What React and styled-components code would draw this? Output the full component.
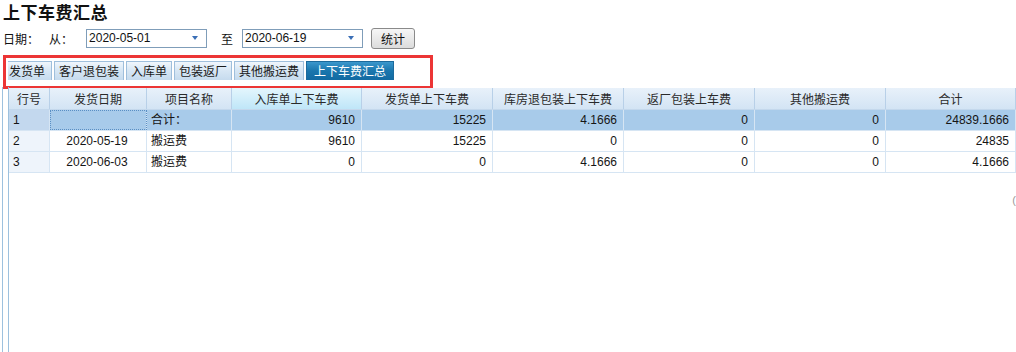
import React from "react";
import styled, { createGlobalStyle } from "styled-components";

const GlobalStyle = createGlobalStyle`
  html, body {
    margin: 0;
    padding: 0;
    background: #fff;
    font-family: "Liberation Sans", "Noto Sans CJK SC", sans-serif;
    font-size: 12px;
    color: #1e1e1e;
  }
`;

const columns = [
  { title: "行号", width: "41px", align: "left" },
  { title: "发货日期", width: "97px", align: "center" },
  { title: "项目名称", width: "85px", align: "left" },
  { title: "入库单上下车费", width: "130px", align: "right", sorted: true },
  { title: "发货单上下车费", width: "131px", align: "right" },
  { title: "库房退包装上下车费", width: "131px", align: "right" },
  { title: "返厂包装上车费", width: "131px", align: "right" },
  { title: "其他搬运费", width: "131px", align: "right" },
  { title: "合计", width: "1fr", align: "right" },
];

const rows = [
  ["1", "", "合计：", "9610", "15225", "4.1666", "0", "0", "24839.1666"],
  ["2", "2020-05-19", "搬运费", "9610", "15225", "0", "0", "0", "24835"],
  ["3", "2020-06-03", "搬运费", "0", "0", "4.1666", "0", "0", "4.1666"],
];

const tabs = ["发货单", "客户退包装", "入库单", "包装返厂", "其他搬运费", "上下车费汇总"];

const template = columns.map((c) => c.width).join(" ");

export default function App() {
  return (
    <Page>
      <GlobalStyle />
      <Title>上下车费汇总</Title>
      <FilterBar>
        <Label>日期：</Label>
        <Label $gap="13px">从：</Label>
        <DateBox>
          <span>2020-05-01</span>
          <Arrow />
        </DateBox>
        <Label $gap="9px" $left="14px">至</Label>
        <DateBox>
          <span>2020-06-19</span>
          <Arrow />
        </DateBox>
        <Button>统计</Button>
      </FilterBar>
      <TabFrame>
        <Tabs>
          {tabs.map((t, i) => (
            <Tab key={t} $active={i === tabs.length - 1}>
              {t}
            </Tab>
          ))}
        </Tabs>
      </TabFrame>
      <Panel>
        <Grid>
          <HeaderRow>
            {columns.map((c) => (
              <HeaderCell key={c.title} $sorted={c.sorted}>
                {c.title}
              </HeaderCell>
            ))}
          </HeaderRow>
          {rows.map((r, ri) => (
            <Row key={ri} $selected={ri === 0}>
              {r.map((v, ci) => (
                <Cell
                  key={ci}
                  $align={columns[ci].align}
                  $rowNo={ci === 0}
                  $selected={ri === 0}
                  $focus={ri === 0 && ci === 1}
                >
                  {v}
                </Cell>
              ))}
            </Row>
          ))}
        </Grid>
        <EdgeMark>(</EdgeMark>
      </Panel>
    </Page>
  );
}

const Page = styled.div`
  width: 1016px;
  height: 352px;
  overflow: hidden;
  display: flex;
  flex-direction: column;
`;

const Title = styled.div`
  font-family: "Noto Sans CJK SC", sans-serif;
  font-weight: 700;
  font-size: 17px;
  line-height: 20px;
  padding: 2px 0 0 3px;
  letter-spacing: 0.5px;
  color: #111;
`;

const FilterBar = styled.div`
  display: flex;
  align-items: center;
  height: 20px;
  margin-top: 6px;
  padding-left: 3px;
`;

const Label = styled.span`
  font-family: "Noto Sans CJK SC", sans-serif;
  font-size: 12px;
  margin-left: ${(p) => p.$left || "0"};
  margin-right: ${(p) => p.$gap || "10px"};
  color: #111;
`;

const DateBox = styled.div`
  width: 109px;
  height: 17px;
  border: 1px solid #7f9db9;
  display: flex;
  align-items: center;
  justify-content: space-between;
  padding: 0 8px 0 2px;
  box-sizing: content-box;
  font-size: 12px;
  color: #111;
`;

const Arrow = styled.i`
  width: 0;
  height: 0;
  border-left: 3px solid transparent;
  border-right: 3px solid transparent;
  border-top: 4px solid #3b6fb6;
`;

const Button = styled.button`
  margin-left: 8px;
  width: 44px;
  height: 21px;
  border: 1px solid #8a8a8a;
  border-radius: 3px;
  background: linear-gradient(#f6f6f6, #dcdcdc);
  font-family: "Noto Sans CJK SC", sans-serif;
  font-size: 12px;
  color: #111;
  padding: 0;
`;

const TabFrame = styled.div`
  margin: 7px 0 0 3px;
  width: 422px;
  height: 25px;
  border: 3px solid #ec3535;
  padding: 3px 0 0 2px;
  box-sizing: content-box;
`;

const Tabs = styled.div`
  display: flex;
  gap: 2px;
  height: 19px;
`;

const Tab = styled.div`
  font-family: "Noto Sans CJK SC", sans-serif;
  font-size: 12px;
  line-height: 18px;
  padding: 0 ${(p) => (p.$active ? "7px" : "4px")};
  border: 1px solid ${(p) => (p.$active ? "#1c6a9c" : "#9fbfdc")};
  border-bottom: none;
  color: ${(p) => (p.$active ? "#fff" : "#1a1a1a")};
  background: ${(p) =>
    p.$active
      ? "linear-gradient(#3b97cc, #1a76ad 50%, #126aa2)"
      : "linear-gradient(#f0f6fc, #d6e6f4 50%, #c6dbee)"};
  white-space: nowrap;
  &:first-child {
    padding-left: 1px;
    padding-right: 6px;
    border-left: none;
  }
`;

const Panel = styled.div`
  flex: 1;
  margin: -2px 0 0 2px;
  border-left: 1px solid #9dc1de;
  padding-left: 5px;
  display: flex;
  position: relative;
`;

const EdgeMark = styled.span`
  position: absolute;
  right: 0;
  top: 107px;
  font-size: 11px;
  color: #9a9a9a;
`;

const Grid = styled.div`
  flex: 1;
  border-left: 1px solid #9dc1de;
  padding-top: 1px;
`;

const HeaderRow = styled.div`
  display: grid;
  grid-template-columns: ${template};
  height: 21px;
  border-bottom: 1px solid #c4d8ec;
`;

const HeaderCell = styled.div`
  font-family: "Noto Sans CJK SC", sans-serif;
  font-size: 12px;
  line-height: 21px;
  text-align: center;
  color: #2a2a2a;
  border-right: 1px solid #b8d0e8;
  background: ${(p) =>
    p.$sorted
      ? "linear-gradient(#e4f6fd, #bfe6f8)"
      : "linear-gradient(#e8f1fa, #d3e4f4)"};
  white-space: nowrap;
  overflow: hidden;
`;

const Row = styled.div`
  display: grid;
  grid-template-columns: ${template};
  height: 20px;
  border-bottom: 1px solid #d6e5f3;
  background: ${(p) => (p.$selected ? "#a8cbea" : "#fff")};
`;

const Cell = styled.div`
  font-family: "Liberation Sans", "Noto Sans CJK SC", sans-serif;
  font-size: 12px;
  line-height: 20px;
  padding: 0 6px 0 4px;
  text-align: ${(p) => p.$align};
  color: #151515;
  border-right: 1px solid #d6e5f3;
  white-space: nowrap;
  overflow: hidden;
  box-sizing: border-box;
  background: ${(p) =>
    p.$rowNo ? (p.$selected ? "#c3d8ee" : "#eef4fb") : "transparent"};
  outline: ${(p) => (p.$focus ? "1px dotted #5a8fc4" : "none")};
  outline-offset: -1px;
`;
